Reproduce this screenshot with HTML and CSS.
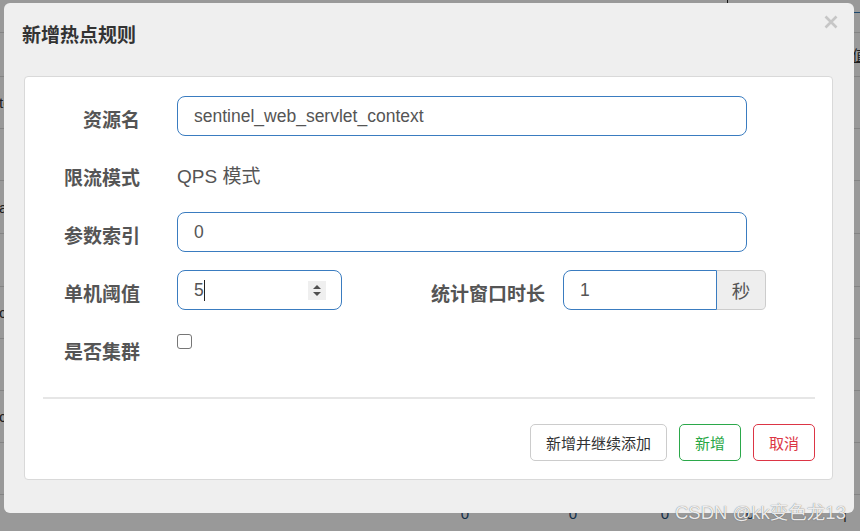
FILE: index.html
```html
<!DOCTYPE html>
<html lang="zh-CN">
<head>
<meta charset="utf-8">
<title>新增热点规则</title>
<link rel="stylesheet" href="styles.css">
</head>
<body>
<div class="page">
  <div class="tabs"><div class="tab"></div></div>
  <div class="prow h20"></div>
  <div class="prow h44"><span class="rtext">值</span></div>
  <div class="prow h52"><span class="ltext">test</span></div>
  <div class="prow h52"></div>
  <div class="prow h53"><span class="ltext">app</span></div>
  <div class="prow h53"></div>
  <div class="prow h52"><span class="ltext">com</span></div>
  <div class="prow h52"></div>
  <div class="prow h52"><span class="ltext">com</span></div>
  <div class="prow h52"></div>
  <div class="prow last">
    <span class="num n1">0</span>
    <span class="num n2">0</span>
    <span class="num n3">0</span>
    <span class="num n4">0</span>
    <span class="num n5">|</span>
  </div>
</div>
<div class="backdrop"></div>

<div class="modal">
  <div class="modal-header">
    <div class="modal-title">新增热点规则</div>
    <div class="close" aria-label="close">
      <svg width="14" height="14" viewBox="0 0 14 14"><path d="M1.5 1.5 L12.5 12.5 M12.5 1.5 L1.5 12.5" stroke="#c6c6c6" stroke-width="2.6" stroke-linecap="butt"/></svg>
    </div>
  </div>
  <div class="panel">
    <div class="form-row">
      <label class="label">资源名</label>
      <input class="input wide" type="text" value="sentinel_web_servlet_context">
    </div>
    <div class="form-row">
      <label class="label">限流模式</label>
      <div class="static">QPS 模式</div>
    </div>
    <div class="form-row">
      <label class="label">参数索引</label>
      <input class="input wide" type="text" value="0">
    </div>
    <div class="form-row">
      <label class="label">单机阈值</label>
      <div class="input num-input">
        <span class="val">5</span><span class="caret"></span>
        <span class="spin">
          <svg width="18" height="19" viewBox="0 0 18 19"><path d="M5 8 L9 4 L13 8 Z M5 11 L9 15 L13 11 Z" fill="#505050"/></svg>
        </span>
      </div>
      <label class="label label2">统计窗口时长</label>
      <div class="group">
        <input class="input gin" type="text" value="1">
        <span class="addon">秒</span>
      </div>
    </div>
    <div class="form-row">
      <label class="label">是否集群</label>
      <span class="checkbox"></span>
    </div>
    <div class="divider"></div>
    <div class="actions">
      <button class="btn btn-default">新增并继续添加</button>
      <button class="btn btn-success">新增</button>
      <button class="btn btn-danger">取消</button>
    </div>
  </div>
</div>
<div class="watermark">CSDN @kk变色龙13</div>
</body>
</html>
```

FILE: styles.css
```css
html, body {
  margin: 0;
  padding: 0;
}
body {
  width: 860px;
  height: 531px;
  overflow: hidden;
  position: relative;
  background: #fff;
  font-family: "Liberation Sans", "Noto Sans CJK SC", sans-serif;
  color: #333;
}

/* underlying page */
.page {
  width: 860px;
}
.tabs {
  height: 13px;
  display: flex;
  box-sizing: border-box;
}
.tab {
  margin-left: 727px;
  flex: 1;
  border-left: 1px solid #222;
  border-bottom: 1px solid #337ab7;
}
.prow {
  box-sizing: border-box;
  border-bottom: 1px solid #ddd;
  display: flex;
  align-items: center;
  position: relative;
  font-size: 14px;
  color: #333;
}
.h20 { height: 20px; }
.h44 { height: 44px; }
.h52 { height: 52px; }
.h53 { height: 53px; }
.last { height: 37px; border-bottom: none; }
.ltext {
  margin-left: -1px;
  font-size: 15px;
}
.rtext {
  margin-left: 852px;
  font-size: 15px;
  text-decoration: underline;
}
.num {
  color: #1f4f7a;
  font-size: 15px;
  width: 10px;
  text-align: center;
}
.n1 { margin-left: 460px; }
.n2 { margin-left: 98px; }
.n3 { margin-left: 82px; }
.n4 { margin-left: 75px; }
.n5 { margin-left: 85px; color: #333; }

.backdrop {
  position: absolute;
  inset: 0;
  background: rgba(0, 0, 0, 0.4);
}

/* modal */
.modal {
  position: absolute;
  left: 4px;
  top: 3px;
  width: 850px;
  height: 510px;
  box-sizing: border-box;
  background: #efefef;
  border-radius: 6px;
  padding: 0 21px 0 20px;
}
.modal-header {
  height: 73px;
  box-sizing: border-box;
  padding-top: 20px;
  margin-left: -2px;
  margin-right: -5px;
  display: flex;
  justify-content: space-between;
  align-items: flex-start;
}
.modal-title {
  font-size: 19px;
  line-height: 26px;
  font-weight: 700;
  color: #333;
}
.close {
  margin-top: -8px;
  width: 14px;
  height: 14px;
  display: flex;
}

.panel {
  height: 404px;
  box-sizing: border-box;
  background: #fff;
  border: 1px solid #d9d9d9;
  border-radius: 4px;
  padding: 19px 18px 0 18px;
}
.form-row {
  display: flex;
  align-items: flex-start;
  height: 40px;
  margin-bottom: 18px;
}
.label {
  width: 97px;
  flex: none;
  box-sizing: border-box;
  text-align: right;
  font-size: 19px;
  line-height: 25px;
  padding-top: 10px;
  font-weight: 700;
  color: #555;
  margin-right: 37px;
  font-family: "Noto Sans CJK SC", sans-serif;
}
.label2 {
  width: 114px;
  margin-left: 89px;
  margin-right: 18px;
}
.input {
  height: 40px;
  box-sizing: border-box;
  border: 1px solid #3a7cc0;
  border-radius: 8px;
  padding: 0 16px;
  font-family: "Liberation Sans", "Noto Sans CJK SC", sans-serif;
  font-size: 17.5px;
  color: #555;
  background: #fff;
  outline: none;
  margin: 0;
}
.wide {
  width: 570px;
}
.static {
  font-size: 19px;
  line-height: 25px;
  padding-top: 10px;
  color: #555;
}
.num-input {
  width: 165px;
  display: flex;
  align-items: center;
}
.val {
  line-height: 20px;
}
.caret {
  width: 1.5px;
  height: 21px;
  background: #222;
  margin-left: 0;
}
.spin {
  margin-left: auto;
  margin-right: 0;
  width: 18px;
  height: 19px;
  background: #efefef;
  display: flex;
  position: relative;
  left: 1px;
}
.group {
  display: flex;
}
.gin {
  width: 154px;
  border-radius: 8px 0 0 8px;
}
.addon {
  width: 49px;
  height: 40px;
  box-sizing: border-box;
  background: #eee;
  border: 1px solid #ccc;
  border-left: none;
  border-radius: 0 5px 5px 0;
  display: flex;
  align-items: center;
  justify-content: center;
  font-size: 18.5px;
  color: #555;
}
.checkbox {
  margin-top: 6px;
  width: 15px;
  height: 15px;
  box-sizing: border-box;
  border: 1px solid #767676;
  border-radius: 3px;
  background: #fff;
}
.divider {
  height: 2px;
  background: #e6e6e6;
  margin-top: 29px;
  margin-right: -1px;
}
.actions {
  margin-top: 25px;
  display: flex;
  justify-content: flex-end;
  gap: 12px;
  margin-right: -1px;
}
.btn {
  height: 37px;
  box-sizing: border-box;
  padding: 0 15px;
  font-size: 15px;
  font-family: "Noto Sans CJK SC", sans-serif;
  background: #fff;
  border: 1px solid #ccc;
  border-radius: 5px;
  color: #333;
  margin: 0;
}
.btn-success {
  border-color: #2ba84a;
  color: #28a745;
}
.btn-danger {
  border-color: #dc3545;
  color: #dc3545;
}

.watermark {
  position: absolute;
  left: 675px;
  top: 501px;
  font-size: 18.5px;
  line-height: 24px;
  color: rgba(255, 255, 255, 0.88);
  text-shadow: 0 0 1px rgba(60, 60, 60, 0.8);
  white-space: nowrap;
}
```
